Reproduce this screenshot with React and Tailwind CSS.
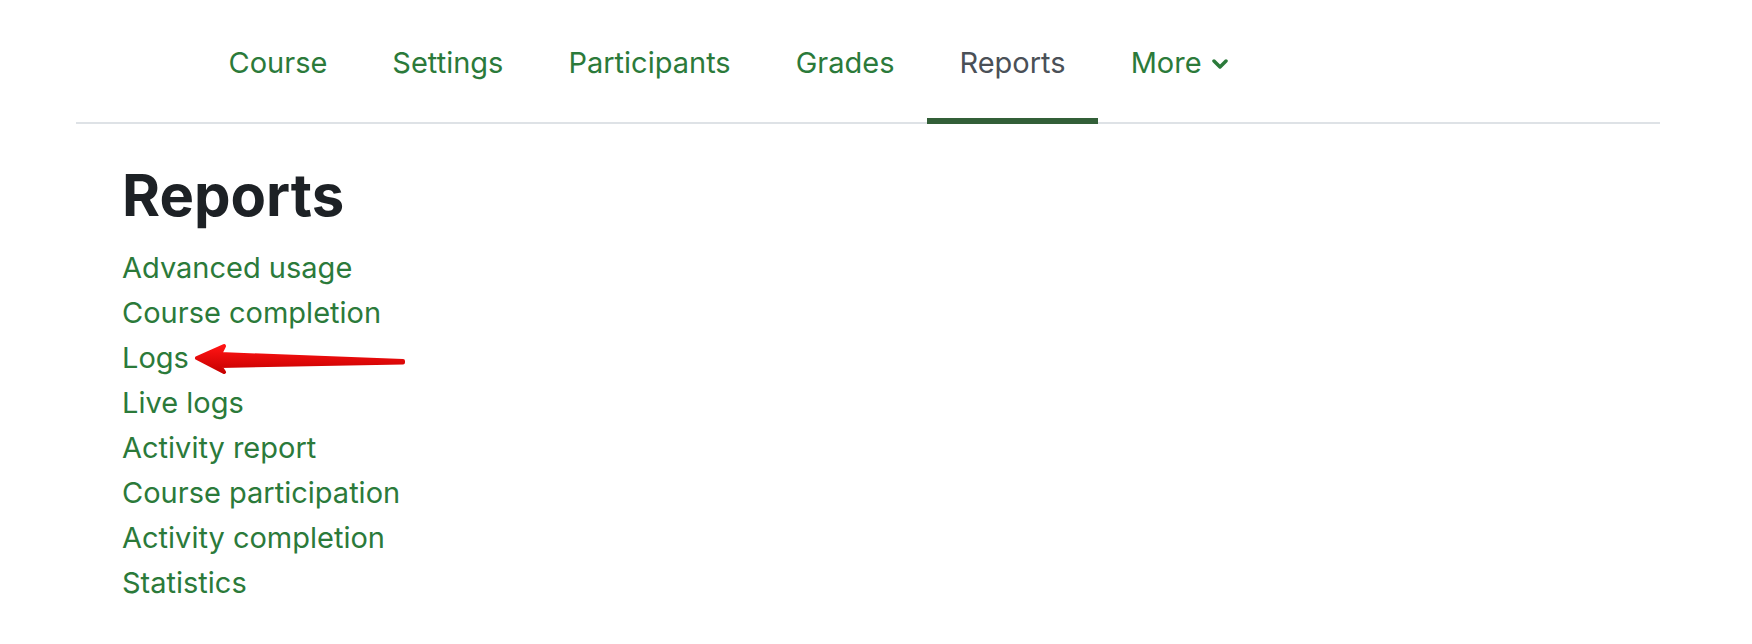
import React from "react";

const tabs = ["Course", "Settings", "Participants", "Grades", "Reports", "More"];

const reports = [
    "Advanced usage",
    "Course completion",
    "Logs",
    "Live logs",
    "Activity report",
    "Course participation",
    "Activity completion",
    "Statistics",
];

// fleche rouge qui pointe vers "Logs"
const RedArrow = () => (
    <svg
        className="absolute left-[188px] top-[338px]"
        width="222"
        height="42"
        viewBox="0 0 222 42"
    >
        <defs>
            <linearGradient id="arrowRed" x1="0" y1="0" x2="0" y2="1">
                <stop offset="0" stopColor="#ff1414" />
                <stop offset="1" stopColor="#c80000" />
            </linearGradient>
        </defs>
        <path
            d="M9 20 L36 8 L32 16 L215 23 L215 24.5 L32 28 L36 34 Z"
            fill="url(#arrowRed)"
            stroke="url(#arrowRed)"
            strokeWidth="4"
            strokeLinejoin="round"
        />
    </svg>
);

const Chevron = () => (
    <svg width="16" height="10" viewBox="0 0 16 10" className="ml-[10px] mt-[2px]">
        <path d="M2 2 L8 8 L14 2" fill="none" stroke="#2b7a3a" strokeWidth="3.5" strokeLinecap="round" strokeLinejoin="round" />
    </svg>
);

export default function App() {
    return (
        <div
            className="relative w-full h-[644px] bg-white"
            style={{ fontFamily: 'Inter, "Liberation Sans", Arial, sans-serif' }}
        >
            {/* navigation secondaire */}
            <nav className="ml-[76px] w-[1584px] border-b-2 border-[#dee2e6]">
                <ul className="flex pl-[120px] -mb-[2px]">
                    {tabs.map((tab) => {
                        const active = tab === "Reports";
                        return (
                            <li key={tab}>
                                <a
                                    className={
                                        active
                                            ? "flex items-center h-[124px] pt-[7px] px-[32.5px] border-b-[6px] border-[#325f38] text-[#4a5057] text-[29px] leading-[45px]"
                                            : "flex items-center h-[124px] pt-[7px] px-[32.5px] border-b-[6px] border-transparent text-[#2b7a3a] text-[29px] leading-[45px]"
                                    }
                                >
                                    {tab}
                                    {tab === "More" && <Chevron />}
                                </a>
                            </li>
                        );
                    })}
                </ul>
            </nav>

            <div className="pl-[122px] pt-[38px]">
                <h2 className="text-[58px] leading-[67px] font-bold text-[#1d2125] mb-[16px]">
                    Reports
                </h2>
                <ul>
                    {reports.map((r) => (
                        <li key={r} className="text-[29px] leading-[45px] text-[#2b7a3a]">
                            <a>{r}</a>
                        </li>
                    ))}
                </ul>
            </div>

            <RedArrow />
        </div>
    );
}
